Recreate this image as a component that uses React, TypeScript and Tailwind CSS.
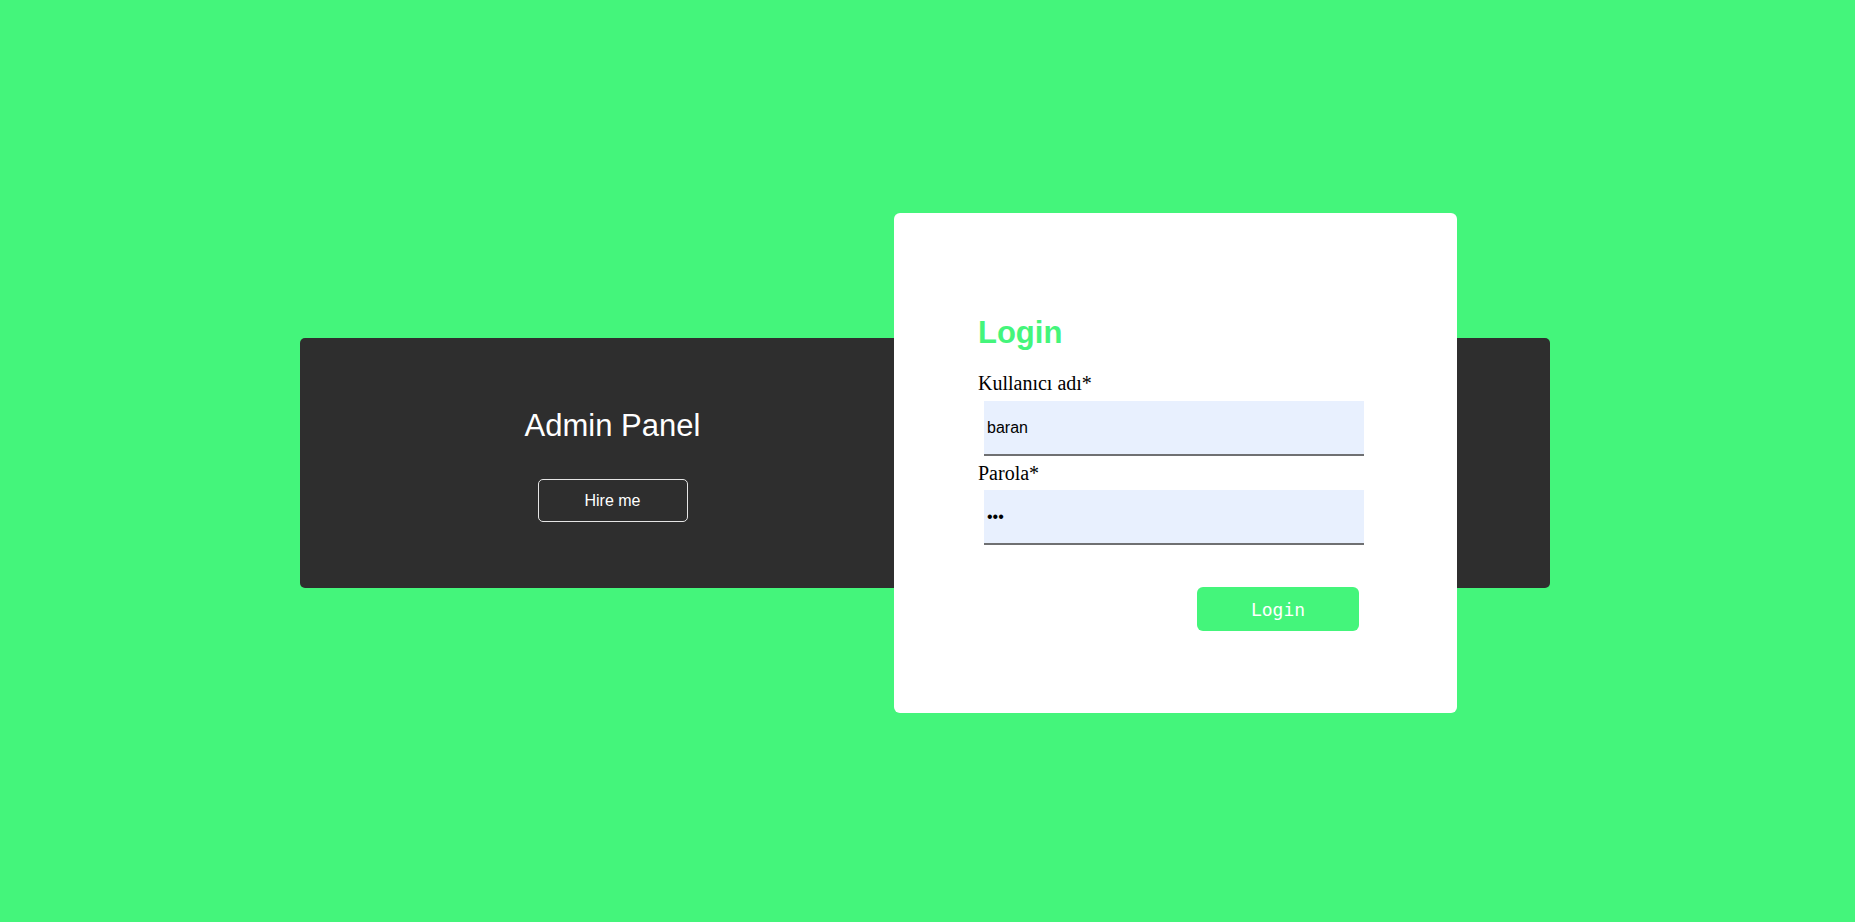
import { useState } from 'react';

export default function App() {
    const [username, setUsername] = useState('baran');
    const [password, setPassword] = useState('abc');

    return (
        <div className="min-h-screen w-full bg-[#44f57b] flex items-center justify-center pr-[5px] pt-[4px] font-['Liberation_Sans',Arial,sans-serif]">
            {/* Dark banner */}
            <div className="relative w-[1250px] h-[250px] bg-[#2e2e2e] rounded-[5px] flex">
                <div className="w-1/2 flex flex-col items-center pt-[69px]">
                    <h1 className="text-[31px] leading-[37px] font-normal text-white">Admin Panel</h1>
                    <button className="mt-[35px] w-[150px] h-[43px] border border-[#e5e5e5] rounded-[5px] text-white text-base flex items-center justify-center">
                        Hire me
                    </button>
                </div>

                {/* Login card over the banner */}
                <div className="absolute left-[594px] top-[-125px] w-[563px] h-[500px] bg-white rounded-[6px] pl-[84px] pt-[101px]">
                    <h1 className="text-[31px] leading-[37px] font-bold text-[#44f57b]">Login</h1>
                    <form className="w-[386px] flex flex-col" onSubmit={(e) => e.preventDefault()}>
                        <label className="mt-[20px] block text-[20px] leading-[24px] text-black font-['Liberation_Serif','Times_New_Roman',serif]">
                            Kullanıcı adı*
                        </label>
                        <input
                            value={username}
                            onChange={(e) => setUsername(e.target.value)}
                            className="mt-[6px] ml-[6px] w-[380px] h-[55px] bg-[#e8f0fe] border-b-2 border-[#6f7072] pl-[3px] text-base text-black outline-none font-['Liberation_Sans',Arial,sans-serif]"
                        />
                        <label className="mt-[5px] block text-[20px] leading-[24px] text-black font-['Liberation_Serif','Times_New_Roman',serif]">
                            Parola*
                        </label>
                        <input
                            type="password"
                            value={password}
                            onChange={(e) => setPassword(e.target.value)}
                            className="mt-[5px] ml-[6px] w-[380px] h-[55px] bg-[#e8f0fe] border-b-2 border-[#6f7072] pl-[3px] text-base text-black outline-none font-['Liberation_Sans',Arial,sans-serif]"
                        />
                        <div className="mt-[42px] flex justify-end pr-[5px]">
                            <button
                                type="submit"
                                className="w-[162px] h-[44px] bg-[#44f57b] rounded-[6px] text-white text-[18px] flex items-center justify-center font-['DejaVu_Sans_Mono',monospace]"
                            >
                                Login
                            </button>
                        </div>
                    </form>
                </div>
            </div>
        </div>
    );
}
